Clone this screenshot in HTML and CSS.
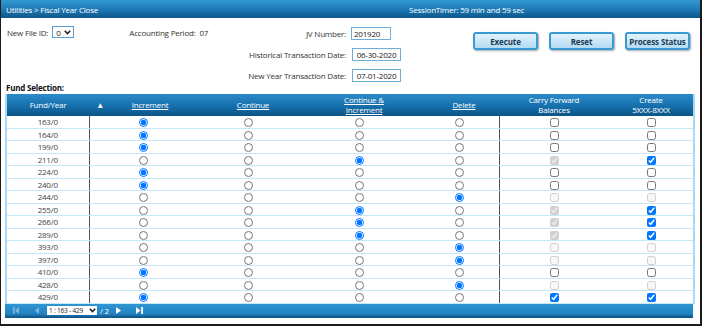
FILE: index.html
```html
<!DOCTYPE html>
<html lang="en">
<head>
  <meta charset="UTF-8" />
  <title>Utilities | Fiscal Year Close</title>
  <link rel="stylesheet" href="styles.css">
</head>
<body>
  <div class="frame">
    <div class="titlebar">
      <span class="crumb">Utilities &gt; Fiscal Year Close</span>
      <span>SessionTimer: 59 min and 59 sec</span>
    </div>

    <div class="top">
      <div class="left">
        <label>New File ID:</label>
        <span class="dropdown file-dd">0 <svg width="7" height="5" viewBox="0 0 7 5"><path d="M0.8 0.8 L3.5 3.6 L6.2 0.8" fill="none" stroke="#222" stroke-width="1.6"/></svg></span>
        <span class="period">Accounting Period:&nbsp; 07</span>
      </div>
      <div class="fields">
        <label>JV Number:</label>
        <input class="txt jv" type="text" value="201920">
        <label>Historical Transaction Date:</label>
        <input class="txt date" type="text" value="06-30-2020">
        <label>New Year Transaction Date:</label>
        <input class="txt date" type="text" value="07-01-2020">
      </div>
      <div class="actions">
        <button class="btn">Execute</button>
        <button class="btn">Reset</button>
        <button class="btn">Process Status</button>
      </div>
    </div>

    <div class="section-label">Fund Selection:</div>

    <table class="funds">
      <colgroup>
        <col style="width:83px"><col style="width:118px"><col style="width:92px"><col style="width:130px">
        <col style="width:70px"><col style="width:110px"><col style="width:85px">
      </colgroup>
      <thead>
        <tr>
          <th>Fund/Year</th>
          <th><div class="sortcell"><span class="sort">&#9650;</span><a href="#">Increment</a></div></th>
          <th><a href="#">Continue</a></th>
          <th><a href="#">Continue &amp;<br>Increment</a></th>
          <th><a href="#">Delete</a></th>
          <th>Carry Forward<br>Balances</th>
          <th>Create<br>5XXX-8XXX</th>
        </tr>
      </thead>
      <tbody id="rows"></tbody>
    </table>

    <div class="pager">
      <svg class="pg first" width="6" height="7" viewBox="0 0 6 7"><rect x="0" y="0" width="1.6" height="7" fill="#7eb4dc"/><path d="M6 0 L2 3.5 L6 7 Z" fill="#7eb4dc"/></svg>
      <svg class="pg prev" width="4" height="7" viewBox="0 0 4 7"><path d="M4 0 L0 3.5 L4 7 Z" fill="#7eb4dc"/></svg>
      <span class="dropdown page-dd">1 : 163 - 429 <svg width="7" height="5" viewBox="0 0 7 5"><path d="M0.8 0.8 L3.5 3.6 L6.2 0.8" fill="none" stroke="#222" stroke-width="1.6"/></svg></span>
      <span class="of">/ 2</span>
      <svg class="pg next" width="5" height="7" viewBox="0 0 5 7"><path d="M0 0 L5 3.5 L0 7 Z" fill="#fff"/></svg>
      <svg class="pg last" width="7" height="7" viewBox="0 0 7 7"><path d="M0 0 L4.5 3.5 L0 7 Z" fill="#fff"/><rect x="5.2" y="0" width="1.8" height="7" fill="#fff"/></svg>
    </div>
  </div>

  <script>
    // fund, selected action, carry forward state, create state
    const funds = [
      ['163/0', 'inc', 'off', 'off'],
      ['164/0', 'inc', 'off', 'off'],
      ['199/0', 'inc', 'off', 'off'],
      ['211/0', 'ci', 'dchk', 'on'],
      ['224/0', 'inc', 'off', 'off'],
      ['240/0', 'inc', 'off', 'off'],
      ['244/0', 'del', 'dis', 'dis'],
      ['255/0', 'ci', 'dchk', 'on'],
      ['266/0', 'ci', 'dchk', 'on'],
      ['289/0', 'ci', 'dchk', 'on'],
      ['393/0', 'del', 'dis', 'dis'],
      ['397/0', 'del', 'dis', 'dis'],
      ['410/0', 'inc', 'off', 'off'],
      ['428/0', 'del', 'dis', 'dis'],
      ['429/0', 'inc', 'on', 'on']
    ];
    const actions = ['inc', 'cont', 'ci', 'del'];
    const tbody = document.getElementById('rows');

    function box(state) {
      const checked = (state === 'on' || state === 'dchk') ? ' checked' : '';
      const disabled = (state === 'dis' || state === 'dchk') ? ' disabled' : '';
      return `<input type="checkbox"${checked}${disabled}>`;
    }

    funds.forEach(([fund, pick, cfb, create], i) => {
      const tr = document.createElement('tr');
      let html = `<td class="fund">${fund}</td>`;
      actions.forEach(a => {
        html += `<td class="opt"><input type="radio" name="f${i}"${a === pick ? ' checked' : ''}></td>`;
      });
      html += `<td class="chk cfb">${box(cfb)}</td><td class="chk">${box(create)}</td>`;
      tr.innerHTML = html;
      tbody.appendChild(tr);
    });
  </script>
</body>
</html>
```

FILE: styles.css
```css
body {
  margin: 0;
  background-color: #fff;
}
.frame {
  width: 702px;
  height: 326px;
  box-sizing: border-box;
  border-left: 1px solid #1c1c1c;
  border-right: 2px solid #1c1c1c;
  border-bottom: 2px solid #1c1c1c;
  font-family: "Open Sans", "Liberation Sans", sans-serif;
  font-size: 8px;
  letter-spacing: -0.2px;
  color: #333;
  overflow: hidden;
}
.titlebar {
  height: 18px;
  display: flex;
  align-items: center;
  background: linear-gradient(#3398d2, #1a74b0 60%, #0d5688);
  color: #fff;
}
.crumb {
  width: 403px;
  padding-left: 5px;
}
.top {
  display: flex;
  height: 64px;
  padding-top: 8px;
  box-sizing: border-box;
}
.left {
  width: 241px;
  height: 12px;
  display: flex;
  align-items: center;
  padding-left: 6px;
  box-sizing: border-box;
}
.dropdown {
  display: inline-flex;
  align-items: center;
  justify-content: space-between;
  box-sizing: border-box;
  background-color: #fff;
  color: #222;
}
.file-dd {
  width: 22px;
  height: 12px;
  margin-left: 4px;
  padding: 0 2px 0 3px;
  border: 1px solid #5d9fd3;
}
.period {
  margin-left: 55px;
}
.fields {
  display: grid;
  grid-template-columns: 104px auto;
  column-gap: 5px;
  row-gap: 7px;
  align-items: center;
}
.fields label {
  text-align: right;
}
.txt {
  height: 13px;
  box-sizing: border-box;
  border: 1px solid #6eaedb;
  padding: 0 2px;
  font-family: inherit;
  font-size: 8px;
  letter-spacing: -0.2px;
  color: #222;
}
.jv {
  width: 40px;
}
.date {
  width: 49px;
  margin-left: 1px;
  padding: 0;
  text-align: center;
}
.actions {
  display: flex;
  gap: 11px;
  margin-left: 72px;
  margin-top: 6px;
  height: 18px;
}
.btn {
  width: 65px;
  height: 18px;
  border: 2px solid #3a99d3;
  border-radius: 3px;
  background: linear-gradient(#e3f3fc, #b2dbf2);
  box-shadow: 1px 1px 2px rgba(0,0,0,0.35);
  font-family: inherit;
  font-size: 8px;
  font-weight: bold;
  letter-spacing: -0.1px;
  color: #1b3a56;
  padding: 0;
  cursor: pointer;
}
.section-label {
  height: 12px;
  line-height: 12px;
  padding-left: 5px;
  font-weight: bold;
  color: #111;
}
.funds {
  width: 688px;
  margin-left: 4px;
  table-layout: fixed;
  border-collapse: collapse;
  border-left: 2px solid #a6d9f4;
  border-right: 2px solid #a6d9f4;
}
.funds th {
  height: 22px;
  padding: 0;
  background: linear-gradient(#2b8bc8, #1670ad 55%, #0c5486);
  color: #fff;
  font-weight: normal;
  line-height: 10px;
  text-align: center;
}
.funds th a {
  color: #fff;
}
.sortcell {
  display: flex;
  align-items: center;
  padding-right: 14px;
}
.sort {
  width: 14px;
  padding-left: 4px;
  font-size: 8px;
}
.sortcell a {
  flex: 1;
}
.funds td {
  height: 11.5px;
  padding: 0;
  border-bottom: 1px solid #c4e7fa;
  text-align: center;
  line-height: 11px;
}
.funds td.fund {
  border-right: 1px solid #555;
  color: #444;
}
.funds td.opt {
  padding-right: 9px;
}
.funds td.cfb {
  border-left: 1px solid #555;
}
.funds input {
  width: 9px;
  height: 9px;
  margin: 0;
  vertical-align: middle;
}
.pager {
  width: 688px;
  height: 14px;
  margin-left: 4px;
  display: flex;
  align-items: center;
  background: linear-gradient(#2f95d2, #2283c2 70%, #0b4f7f);
  color: #fff;
}
.pg.first {
  margin-left: 8px;
}
.pg.prev {
  margin-left: 16px;
}
.page-dd {
  width: 50px;
  height: 9px;
  margin-left: 8px;
  padding: 0 1px 0 2px;
  font-size: 6.5px;
}
.of {
  margin-left: 3px;
}
.pg.next {
  margin-left: 7px;
}
.pg.last {
  margin-left: 15px;
}
```
